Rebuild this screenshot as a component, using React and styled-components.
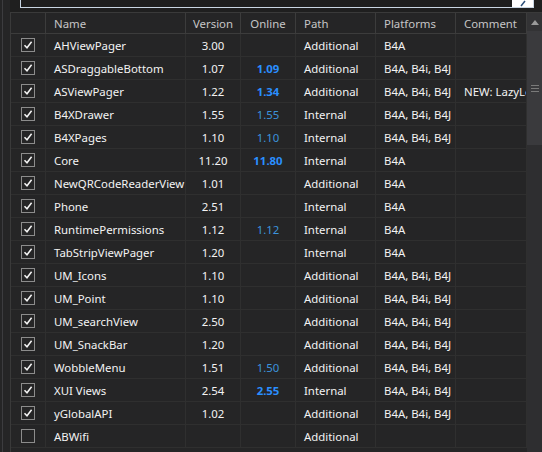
import React from "react";
import styled, { createGlobalStyle } from "styled-components";

const GlobalStyle = createGlobalStyle`
  html, body {
    margin: 0;
    padding: 0;
    background: #252526;
    overflow: hidden;
  }
  body {
    font-family: "Noto Sans", "Open Sans", sans-serif;
    font-size: 11.4px;
  }
`;

const libraries = [
  { name: "AHViewPager", version: "3.00", path: "Additional", platforms: "B4A" },
  { name: "ASDraggableBottom", version: "1.07", online: "1.09", newer: true, path: "Additional", platforms: "B4A, B4i, B4J" },
  { name: "ASViewPager", version: "1.22", online: "1.34", newer: true, path: "Additional", platforms: "B4A, B4i, B4J", comment: "NEW: LazyLoading" },
  { name: "B4XDrawer", version: "1.55", online: "1.55", path: "Internal", platforms: "B4A, B4i, B4J" },
  { name: "B4XPages", version: "1.10", online: "1.10", path: "Internal", platforms: "B4A, B4i, B4J" },
  { name: "Core", version: "11.20", online: "11.80", newer: true, path: "Internal", platforms: "B4A" },
  { name: "NewQRCodeReaderView", version: "1.01", path: "Additional", platforms: "B4A" },
  { name: "Phone", version: "2.51", path: "Internal", platforms: "B4A" },
  { name: "RuntimePermissions", version: "1.12", online: "1.12", path: "Internal", platforms: "B4A" },
  { name: "TabStripViewPager", version: "1.20", path: "Internal", platforms: "B4A" },
  { name: "UM_Icons", version: "1.10", path: "Additional", platforms: "B4A, B4i, B4J" },
  { name: "UM_Point", version: "1.10", path: "Additional", platforms: "B4A, B4i, B4J" },
  { name: "UM_searchView", version: "2.50", path: "Additional", platforms: "B4A, B4i, B4J" },
  { name: "UM_SnackBar", version: "1.20", path: "Additional", platforms: "B4A, B4i, B4J" },
  { name: "WobbleMenu", version: "1.51", online: "1.50", path: "Additional", platforms: "B4A, B4i, B4J" },
  { name: "XUI Views", version: "2.54", online: "2.55", newer: true, path: "Internal", platforms: "B4A, B4i, B4J" },
  { name: "yGlobalAPI", version: "1.02", path: "Additional", platforms: "B4A, B4i, B4J" },
  { name: "ABWifi", unchecked: true, path: "Additional", platforms: "" },
];

const Page = styled.div`
  display: flex;
  height: 452px;
  width: 542px;
  overflow: hidden;
  background: #252526;
`;

const Rail = styled.div`
  width: 7px;
  margin-left: 2px;
  border-left: 1px solid #3c3c3f;
  background: #252526;
  flex-shrink: 0;
`;

const Main = styled.div`
  flex: 1;
  display: flex;
  flex-direction: column;
  min-width: 0;
  background: #1f1f1f;
`;

const FilterBar = styled.div`
  height: 12px;
  padding: 0 8px 0 10px;
  overflow: hidden;
  flex-shrink: 0;
`;

const FilterBox = styled.div`
  margin-top: -14px;
  height: 20px;
  border: 1px solid #c9d6e3;
  background: #1e1e1e;
  display: flex;
  align-items: flex-end;
`;

const FilterText = styled.div`
  flex: 1;
  color: #8d8d8d;
  font-size: 12px;
  line-height: 14px;
  padding: 0 0 9px 4px;
`;

const BrushButton = styled.div`
  width: 21px;
  height: 20px;
  background: #ffffff;
  display: flex;
  align-items: flex-end;
  justify-content: center;
`;

const Body = styled.div`
  flex: 1;
  display: flex;
  min-height: 0;
  border-top: 1px solid #3a3a3a;
`;

const Table = styled.div`
  flex: 1;
  min-width: 0;
  border-left: 1px solid #3a3a3a;
  background: #252526;
  overflow: hidden;
`;

const Row = styled.div`
  display: grid;
  grid-template-columns: 35px 140px 55px 55px 80px 80px 1fr;
  height: ${(p) => (p.$header ? "20px" : "22px")};
  border-bottom: 1px solid ${(p) => (p.$header ? "#3c3c3c" : "#2f2f2f")};
`;

const Cell = styled.div`
  display: flex;
  align-items: center;
  justify-content: ${(p) => (p.$center ? "center" : "flex-start")};
  padding: ${(p) => (p.$center ? "0" : "0 1px 0 8px")};
  border-right: 1px solid ${(p) => (p.$header ? "#3c3c3c" : "#2f2f2f")};
  color: ${(p) => (p.$header ? "#c6c6c6" : "#f3f3f3")};
  white-space: nowrap;
  overflow: hidden;
  min-width: 0;
`;

const CheckCell = styled(Cell)`
  justify-content: center;
  padding: 0;
`;

const Online = styled.span`
  color: ${(p) => (p.$newer ? "#2a8fff" : "#3c93dc")};
  font-weight: ${(p) => (p.$newer ? 700 : 400)};
`;

const Box = styled.div`
  width: 12px;
  height: 12px;
  border: 1px solid #8c8c8c;
  display: flex;
  align-items: center;
  justify-content: center;
`;

const Scrollbar = styled.div`
  width: 15px;
  flex-shrink: 0;
  background: #2e2e30;
  display: flex;
  flex-direction: column;
`;

const ArrowButton = styled.div`
  height: 18px;
  display: flex;
  align-items: center;
  justify-content: center;
  background: #333335;
`;

const Thumb = styled.div`
  height: 114px;
  background: #3a3a3d;
  display: flex;
  align-items: center;
  justify-content: center;
`;

function CheckBox({ checked }) {
  return (
    <Box>
      {checked && (
        <svg width="10" height="10" viewBox="0 0 10 10">
          <path d="M1.5 5.2 L4 7.8 L8.6 1.8" fill="none" stroke="#f4f4f4" strokeWidth="1.5" />
        </svg>
      )}
    </Box>
  );
}

function App() {
  return (
    <Page>
      <GlobalStyle />
      <Rail />
      <Main>
        <FilterBar>
          <FilterBox>
            <FilterText>Filter</FilterText>
            <BrushButton>
              <svg width="10" height="7" viewBox="0 0 10 7">
                <path d="M3 6 L7 1" stroke="#2b4f7a" strokeWidth="1.5" />
              </svg>
            </BrushButton>
          </FilterBox>
        </FilterBar>
        <Body>
          <Table>
            <Row $header>
              <Cell $header />
              <Cell $header>Name</Cell>
              <Cell $header $center>Version</Cell>
              <Cell $header $center>Online</Cell>
              <Cell $header>Path</Cell>
              <Cell $header>Platforms</Cell>
              <Cell $header>Comment</Cell>
            </Row>
            {libraries.map((lib) => (
              <Row key={lib.name}>
                <CheckCell>
                  <CheckBox checked={!lib.unchecked} />
                </CheckCell>
                <Cell>{lib.name}</Cell>
                <Cell $center>{lib.version}</Cell>
                <Cell $center>
                  {lib.online && <Online $newer={lib.newer}>{lib.online}</Online>}
                </Cell>
                <Cell>{lib.path}</Cell>
                <Cell>{lib.platforms}</Cell>
                <Cell>{lib.comment}</Cell>
              </Row>
            ))}
          </Table>
          <Scrollbar>
            <ArrowButton>
              <svg width="8" height="5" viewBox="0 0 8 5">
                <path d="M0 5 L4 0 L8 5 Z" fill="#9a9a9a" />
              </svg>
            </ArrowButton>
            <Thumb>
              <svg width="8" height="7" viewBox="0 0 8 7">
                <path d="M0 0.5 H8 M0 3.5 H8 M0 6.5 H8" stroke="#7a7a7a" strokeWidth="1" />
              </svg>
            </Thumb>
          </Scrollbar>
        </Body>
      </Main>
    </Page>
  );
}

export default App;
